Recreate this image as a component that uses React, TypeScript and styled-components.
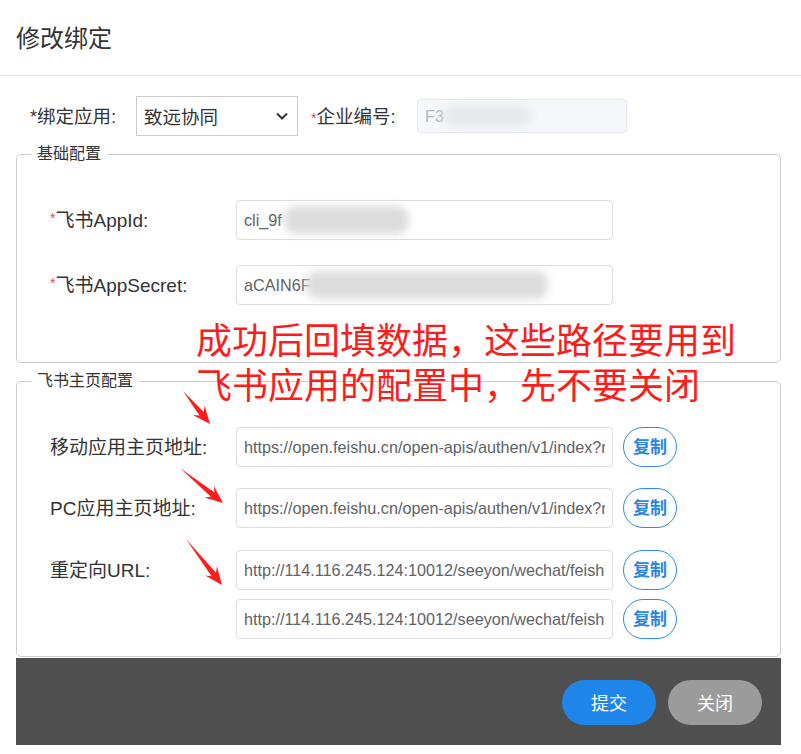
import React from "react";
import styled, { createGlobalStyle } from "styled-components";

const Global = createGlobalStyle`
  html, body { margin: 0; padding: 0; background: #fff; }
  body { font-family: "Liberation Sans", "Noto Sans CJK SC", sans-serif; color: #333; }
  * { box-sizing: border-box; }
`;

const Page = styled.div`
  position: relative;
  width: 801px;
  height: 754px;
  background: #fff;
  overflow: hidden;
`;

const Header = styled.div`
  height: 76px;
  border-bottom: 1px solid #e6e6e6;
  display: flex;
  align-items: center;
  padding-left: 16px;
  padding-bottom: 2px;
  font-size: 24px;
  color: #333;
`;

const Body = styled.div`
  padding: 0 20px 0 16px;
  display: flex;
  flex-direction: column;
`;

const TopRow = styled.div`
  display: flex;
  align-items: center;
  margin-top: 20px;
  height: 40px;
`;

const TopLabel = styled.span<{ $ml?: number; $w: number }>`
  font-size: 18.5px;
  color: #333;
  margin-left: ${(p) => p.$ml ?? 0}px;
  width: ${(p) => p.$w}px;
  white-space: nowrap;
  flex: none;
  padding-bottom: 2px;
`;

const Star = styled.span<{ $red?: boolean }>`
  color: ${(p) => (p.$red ? "#e5474b" : "#333")};
  font-size: ${(p) => (p.$red ? 14 : 18)}px;
`;

const SelectBox = styled.div`
  width: 162px;
  height: 40px;
  border: 1px solid #cccccc;
  display: flex;
  align-items: center;
  justify-content: space-between;
  padding: 0 8px 0 7px;
  font-size: 18.5px;
  color: #333;
  flex: none;
  margin-right: 13px;
`;

const InputWrap = styled.div<{ $w: number; $h?: number }>`
  position: relative;
  width: ${(p) => p.$w}px;
  height: ${(p) => p.$h ?? 40}px;
  flex: none;
`;

const TextInput = styled.input<{ $disabled?: boolean }>`
  width: 100%;
  height: 100%;
  border: 1px solid ${(p) => (p.$disabled ? "#e4e7ed" : "#dcdcdc")};
  background: ${(p) => (p.$disabled ? "#f5f7fa" : "#fff")};
  color: ${(p) => (p.$disabled ? "#b4b8bf" : "#606266")};
  border-radius: 4px;
  padding: 0 7px;
  font-family: "Liberation Sans", "Noto Sans CJK SC", sans-serif;
  font-size: 16.2px;
  outline: none;
`;

const Blur = styled.div<{ $l: number; $w: number; $c?: string }>`
  position: absolute;
  top: 6px;
  bottom: 6px;
  left: ${(p) => p.$l}px;
  width: ${(p) => p.$w}px;
  background: ${(p) => p.$c ?? "#dcdcdc"};
  border-radius: 12px;
  filter: blur(4px);
`;

const Fieldset = styled.fieldset<{ $pb: number; $mt: number }>`
  margin: ${(p) => p.$mt}px 0 0 0;
  border: 1px solid #cccccc;
  border-radius: 5px;
  padding: 37px 0 ${(p) => p.$pb}px 14px;
  min-width: 0;
`;

const Legend = styled.legend`
  margin-left: 0;
  padding: 0 6px;
  font-size: 16px;
  line-height: 18px;
  color: #333;
`;

const Rows = styled.div`
  padding-left: 19px;
  display: flex;
  flex-direction: column;
`;

const Row = styled.div<{ $mt?: number }>`
  display: flex;
  align-items: flex-start;
  margin-top: ${(p) => p.$mt ?? 0}px;
`;

const Label = styled.div`
  width: 186px;
  height: 40px;
  display: flex;
  align-items: center;
  font-size: 19px;
  color: #333;
  white-space: nowrap;
  flex: none;
  padding-bottom: 4px;
`;

const Stack = styled.div`
  display: flex;
  flex-direction: column;
  gap: 9px;
`;

const Line = styled.div`
  display: flex;
  align-items: center;
  gap: 10px;
`;

const CopyBtn = styled.button`
  width: 54px;
  height: 40px;
  border: 1px solid #2d8ce6;
  border-radius: 20px;
  background: #fff;
  color: #2a86e0;
  font-family: "Noto Sans CJK SC", sans-serif;
  font-weight: 700;
  font-size: 17px;
  padding: 0 0 3px 0;
  display: flex;
  align-items: center;
  justify-content: center;
`;

const Footer = styled.div`
  margin-top: 1px;
  height: 87px;
  background: #4f4f4f;
  display: flex;
  align-items: center;
  justify-content: flex-end;
  gap: 12px;
  padding: 0 19px 0 0;
`;

const FootBtn = styled.button<{ $primary?: boolean }>`
  width: 94px;
  height: 45px;
  border: none;
  border-radius: 23px;
  background: ${(p) => (p.$primary ? "#1e86e8" : "#9b9b9b")};
  color: #fff;
  font-family: "Noto Sans CJK SC", sans-serif;
  font-size: 18px;
  padding: 0;
  margin-top: 1px;
`;

const Note = styled.div`
  position: absolute;
  left: 196px;
  top: 316px;
  font-family: "Noto Sans CJK SC", sans-serif;
  font-size: 36px;
  line-height: 45px;
  color: #fc1c1c;
  white-space: nowrap;
  pointer-events: none;
`;

const ArrowLayer = styled.svg`
  position: absolute;
  left: 0;
  top: 0;
  pointer-events: none;
`;

function arrowPoints(x1: number, y1: number, x2: number, y2: number) {
  const dx = x2 - x1;
  const dy = y2 - y1;
  const L = Math.hypot(dx, dy);
  const ux = dx / L;
  const uy = dy / L;
  const nx = -uy;
  const ny = ux;
  const hl = 17;
  const sw = 2.8;
  const hw = 7.5;
  const ax = x2 - ux * hl * 0.78;
  const ay = y2 - uy * hl * 0.78;
  const bx = x2 - ux * hl * 1.05;
  const by = y2 - uy * hl * 1.05;
  const pts = [
    [x1, y1],
    [ax + nx * sw, ay + ny * sw],
    [bx + nx * hw, by + ny * hw],
    [x2, y2],
    [bx - nx * hw, by - ny * hw],
    [ax - nx * sw, ay - ny * sw],
  ];
  return pts.map((p) => `${p[0].toFixed(1)},${p[1].toFixed(1)}`).join(" ");
}

const arrows: [number, number, number, number][] = [
  [183, 391, 210, 424],
  [180, 468, 223, 503],
  [186, 539, 222, 585],
];

const HOME = "https://open.feishu.cn/open-apis/authen/v1/index?redirect_uri=";
const REDIR = "http://114.116.245.124:10012/seeyon/wechat/feishu/auth";

export default function App() {
  return (
    <Page>
      <Global />
      <Header>修改绑定</Header>
      <Body>
        <TopRow>
          <TopLabel $ml={14} $w={106}>
            <Star>*</Star>绑定应用:
          </TopLabel>
          <SelectBox>
            <span>致远协同</span>
            <svg width="14" height="10" viewBox="0 0 14 10">
              <path d="M2 2.5 L7 7.5 L12 2.5" fill="none" stroke="#333" strokeWidth="2" />
            </svg>
          </SelectBox>
          <TopLabel $w={106}>
            <Star $red>*</Star>企业编号:
          </TopLabel>
          <InputWrap $w={210} $h={34}>
            <TextInput $disabled readOnly value="F3" />
            <Blur $l={26} $w={88} $c="#e8e9ec" />
          </InputWrap>
        </TopRow>

        <Fieldset $mt={9} $pb={57}>
          <Legend>基础配置</Legend>
          <Rows>
            <Row>
              <Label>
                <Star $red>*</Star>飞书AppId:
              </Label>
              <InputWrap $w={377}>
                <TextInput readOnly value="cli_9f" />
                <Blur $l={48} $w={125} />
              </InputWrap>
            </Row>
            <Row $mt={25}>
              <Label>
                <Star $red>*</Star>飞书AppSecret:
              </Label>
              <InputWrap $w={377}>
                <TextInput readOnly value="aCAIN6F" />
                <Blur $l={70} $w={242} />
              </InputWrap>
            </Row>
          </Rows>
        </Fieldset>

        <Fieldset $mt={9} $pb={17}>
          <Legend>飞书主页配置</Legend>
          <Rows>
            <Row>
              <Label>移动应用主页地址:</Label>
              <Line>
                <InputWrap $w={377}>
                  <TextInput readOnly value={HOME} />
                </InputWrap>
                <CopyBtn>复制</CopyBtn>
              </Line>
            </Row>
            <Row $mt={21}>
              <Label>PC应用主页地址:</Label>
              <Line>
                <InputWrap $w={377}>
                  <TextInput readOnly value={HOME} />
                </InputWrap>
                <CopyBtn>复制</CopyBtn>
              </Line>
            </Row>
            <Row $mt={22}>
              <Label>重定向URL:</Label>
              <Stack>
                <Line>
                  <InputWrap $w={377}>
                    <TextInput readOnly value={REDIR} />
                  </InputWrap>
                  <CopyBtn>复制</CopyBtn>
                </Line>
                <Line>
                  <InputWrap $w={377}>
                    <TextInput readOnly value={REDIR} />
                  </InputWrap>
                  <CopyBtn>复制</CopyBtn>
                </Line>
              </Stack>
            </Row>
          </Rows>
        </Fieldset>

        <Footer>
          <FootBtn $primary>提交</FootBtn>
          <FootBtn>关闭</FootBtn>
        </Footer>
      </Body>

      <Note>
        成功后回填数据，这些路径要用到
        <br />
        飞书应用的配置中，先不要关闭
      </Note>
      <ArrowLayer width="801" height="754" viewBox="0 0 801 754">
        {arrows.map((a, i) => (
          <polygon key={i} points={arrowPoints(a[0], a[1], a[2], a[3])} fill="#fc1c1c" />
        ))}
      </ArrowLayer>
    </Page>
  );
}
